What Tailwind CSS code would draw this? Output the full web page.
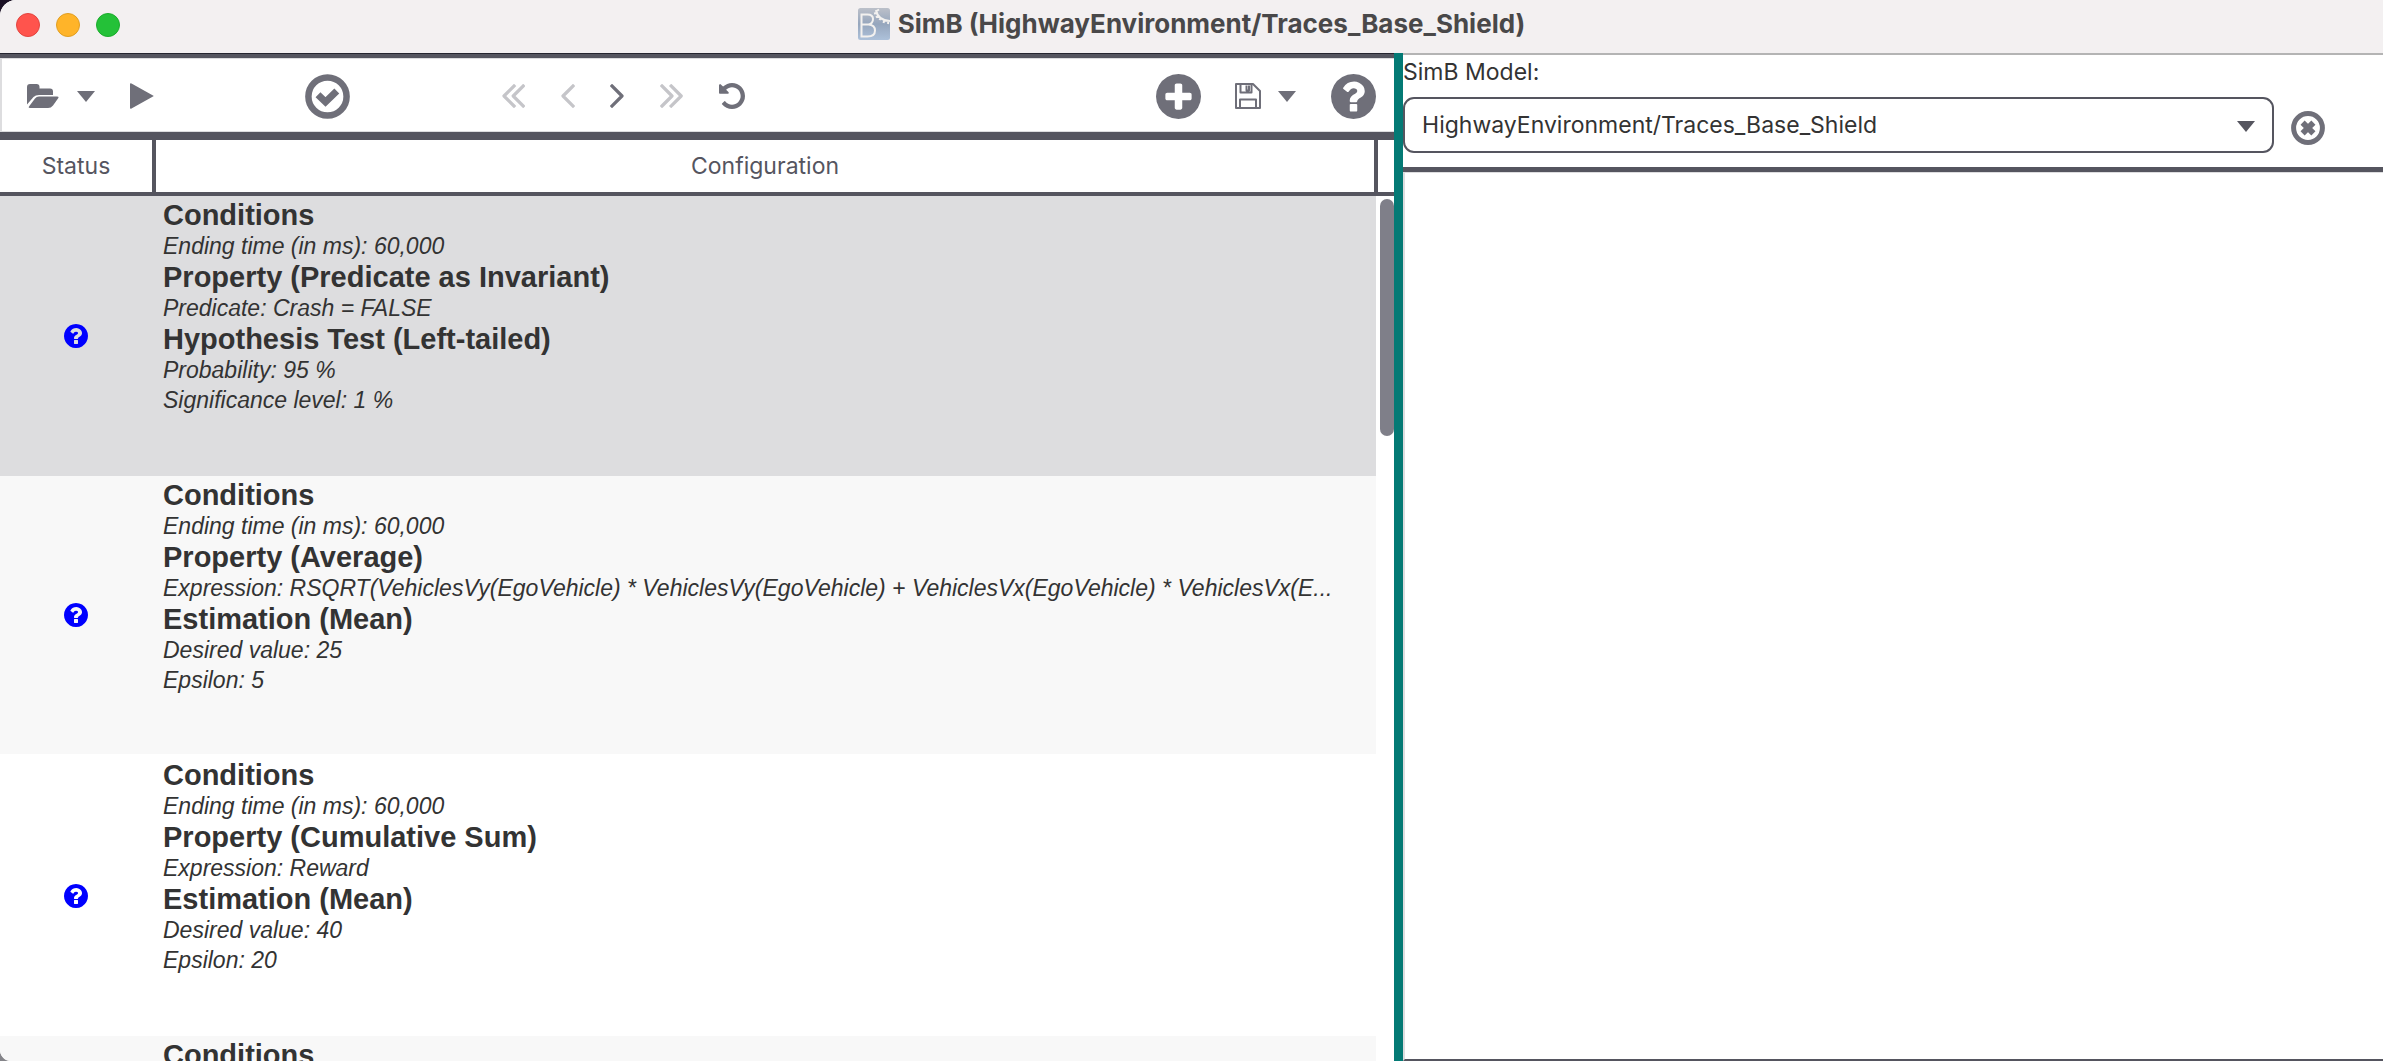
<!DOCTYPE html>
<html lang="en">
<head>
<meta charset="utf-8">
<title>SimB (HighwayEnvironment/Traces_Base_Shield)</title>
<script src="https://cdn.jsdelivr.net/npm/@tailwindcss/browser@4"></script>
</head>
<body class="bg-linear-to-b from-[#1a1024] to-[#85858a]">
<svg class="hidden" aria-hidden="true">
  <symbol id="caret" viewBox="0 0 18 11"><path d="M0 0H18L9 11Z"/></symbol>
  <symbol id="question" viewBox="0 0 1536 1536"><path d="M896 1248v-192q0-14-9-23t-23-9H672q-14 0-23 9t-9 23v192q0 14 9 23t23 9h192q14 0 23-9t9-23zm256-672q0-88-55.500-163T958 297t-170-41q-243 0-371 213-15 24 8 42l132 100q7 6 19 6 16 0 25-12 53-68 86-92 34-24 86-24 48 0 85.500 26t37.500 59q0 38-20 61t-68 45q-63 28-115.500 86.500T640 892v36q0 14 9 23t23 9h192q14 0 23-9t9-23q0-19 21.500-49.500T972 829q32-18 49-28.500t46-35 44.500-48 28-60.500 12.500-81zm384 192q0 209-103 385.500T1153.500 1433 768 1536t-385.500-103T103 1153.500 0 768t103-385.500T382.500 103 768 0t385.500 103T1433 382.500 1536 768z"/></symbol>
</svg>

<div class="flex h-screen flex-col overflow-hidden rounded-tl-[16px] rounded-bl-[11px] bg-white font-['Inter','Liberation_Sans',sans-serif] text-[#333333]">
  <header class="relative flex h-[53px] shrink-0 items-center justify-center bg-[#f3f0f1] pb-[6px]">
    <div class="absolute left-4 top-[13px] flex gap-4">
      <button aria-label="Close" class="size-6 rounded-full border border-[#e2453f] bg-[#ff544d]"></button>
      <button aria-label="Minimize" class="size-6 rounded-full border border-[#e09e22] bg-[#ffb429]"></button>
      <button aria-label="Zoom" class="size-6 rounded-full border border-[#1bac2c] bg-[#24c138]"></button>
    </div>
    <svg class="mr-2 size-8" viewBox="0 0 32 32" fill="none" aria-hidden="true">
      <defs><linearGradient id="logo" x1="0" y1="0" x2="0" y2="1"><stop offset="0" stop-color="#bcc0c9"/><stop offset=".5" stop-color="#96a6bd"/><stop offset="1" stop-color="#adc1da"/></linearGradient></defs>
      <rect width="32" height="32" rx="2.500" fill="url(#logo)"/>
      <path d="M3.500 6.500V28.500H9.500Q17 28.500 17 22.500Q17 17 10.500 16.500Q15 15.500 15 11Q15 6.500 9.500 6.500ZM3.500 16.500H10.500" stroke="#f3f1ef" stroke-width="2"/>
      <path d="M18 2C19 8 23 12.500 32 13M16 5.500L19 5M18 9.500L21 7M21.500 12L23 9.500M25.500 15L26.500 11.500M30 16L30.500 12.500M21 1.500L18.500 3" stroke="#f3f1ef" stroke-width="2"/>
    </svg>
    <h1 class="text-[26px] leading-8 font-bold text-[#494849]">SimB (HighwayEnvironment/Traces_Base_Shield)</h1>
  </header>

  <main class="grid min-h-0 flex-1 grid-cols-[58.5%_9px_1fr]">
    <section class="flex min-h-0 min-w-0 flex-col">
      <div class="h-[5px] shrink-0 border-t border-[#252530] bg-[#55555f]"></div>
      <div class="flex h-[74px] shrink-0 items-center border-y border-l-2 border-[#dddddf] pl-[25px] pr-[18px] pt-[2px] text-[#6f6f79]">
        <button aria-label="Open"><svg class="h-6 w-8" viewBox="0 0 32 24" fill="currentColor"><path d="M0 19V3Q0 0 3 0H9.500Q12.500 0 12.500 3V4.500H23Q26 4.500 26 7.500V11H12Q8.500 11 6.500 13L0 20.500ZM2 22.500L8 14.500Q9.500 12.500 12 12.500H30Q32.500 12.500 31 14.500L26 21.500Q24 24 21 24H3Q1 24 2 22.500Z"/></svg></button>
        <button aria-label="Recent files" class="ml-[18px]"><svg class="h-[11px] w-[18px]" fill="currentColor"><use href="#caret"/></svg></button>
        <button aria-label="Run" class="ml-[35px]"><svg class="h-[26px] w-6" viewBox="0 0 24 26" fill="currentColor"><path d="M0 1.200Q0-.4 1.500.4L23 12.400Q24.200 13 23 13.600L1.500 25.600Q0 26.400 0 24.800Z"/></svg></button>
        <button aria-label="Check" class="ml-[151px]"><svg class="size-[45px]" viewBox="0 0 45 45" fill="none" stroke="currentColor" stroke-width="6.500"><circle cx="22.500" cy="22.500" r="19.100"/><path d="M13 20.800L20.500 28L31.800 17" stroke-width="7"/></svg></button>
        <div class="ml-[152px] flex items-center">
          <button aria-label="First" disabled class="text-[#c5c5c9]"><svg class="h-6 w-[23px]" viewBox="0 0 23 24" fill="none" stroke="currentColor" stroke-width="3.200" stroke-linecap="square" stroke-linejoin="round"><path d="M12 2L2 12L12 22M21.200 2L11.200 12L21.200 22"/></svg></button>
          <button aria-label="Previous" disabled class="ml-9 text-[#c5c5c9]"><svg class="h-6 w-[14px]" viewBox="0 0 14 24" fill="none" stroke="currentColor" stroke-width="3.200" stroke-linecap="square" stroke-linejoin="round"><path d="M12 2L2 12L12 22"/></svg></button>
          <button aria-label="Next" class="ml-[35px]"><svg class="h-6 w-[14px]" viewBox="0 0 14 24" fill="none" stroke="currentColor" stroke-width="3.200" stroke-linecap="square" stroke-linejoin="round"><path d="M2 2L12 12L2 22"/></svg></button>
          <button aria-label="Last" disabled class="ml-9 text-[#c5c5c9]"><svg class="h-6 w-[23px]" viewBox="0 0 23 24" fill="none" stroke="currentColor" stroke-width="3.200" stroke-linecap="square" stroke-linejoin="round"><path d="M2 2L12 12L2 22M11.200 2L21.200 12L11.200 22"/></svg></button>
          <button aria-label="Reset" class="ml-9"><svg class="size-[26px]" viewBox="0 0 1536 1536" fill="currentColor"><path d="M1536 768q0 156-61 298t-164 245-245 164-298 61q-172 0-327-72.500T177 1259q-7-10-6.500-22.500t8.500-20.500l137-138q10-9 25-9 16 2 23 12 73 95 179 147t225 52q104 0 198.500-40.500T1130 1130t109.500-163.500T1280 768t-40.500-198.500T1130 406 966.500 296.500 768 256q-98 0-188 35.500T420 393l137 138q31 30 14 69-17 40-59 40H64q-26 0-45-19T0 576V128q0-42 40-59 39-17 69 14l130 129q107-101 244.500-156.500T768 0q156 0 298 61t245 164 164 245 61 298z"/></svg></button>
        </div>
        <div class="ml-auto flex items-center">
          <button aria-label="Add"><svg class="size-[45px]" viewBox="0 0 1536 1536" fill="currentColor"><path d="M1216 832V704q0-26-19-45t-45-19H896V384q0-26-19-45t-45-19H704q-26 0-45 19t-19 45v256H384q-26 0-45 19t-19 45v128q0 26 19 45t45 19h256v256q0 26 19 45t45 19h128q26 0 45-19t19-45V896h256q26 0 45-19t19-45zm320-64q0 209-103 385.500T1153.500 1433 768 1536t-385.500-103T103 1153.500 0 768t103-385.500T382.500 103 768 0t385.500 103T1433 382.500 1536 768z"/></svg></button>
          <button aria-label="Save" class="ml-[34px]"><svg class="size-[26px]" viewBox="0 0 26 26" fill="none" stroke="currentColor" stroke-width="2" stroke-linejoin="round"><path d="M1 1H18L25 8V25H1ZM5 25V16.500H21V25M5.500 1V9.500H16.500V1M11.500 2.500V7.500H14V2.500"/></svg></button>
          <button aria-label="Save options" class="ml-[17px]"><svg class="h-[11px] w-[18px]" fill="currentColor"><use href="#caret"/></svg></button>
          <button aria-label="Help" class="ml-[35px]"><svg class="size-[45px]" fill="currentColor"><use href="#question"/></svg></button>
        </div>
      </div>
      <div class="h-2 shrink-0 bg-[#55555f]"></div>

      <div class="relative min-h-0 flex-1 overflow-hidden">
        <table class="w-full table-fixed border-separate border-spacing-0 font-['Liberation_Sans',Arial,sans-serif]">
          <colgroup><col class="w-[156px]"><col><col class="w-[18px]"></colgroup>
          <thead class="font-['Inter',sans-serif] text-[23px] leading-[52px] text-[#55555f]">
            <tr>
              <th scope="col" class="border-b-4 border-r-4 border-[#55555f] p-0 font-normal">Status</th>
              <th scope="col" class="border-b-4 border-r-2 border-[#55555f] p-0 font-normal">Configuration</th>
              <td class="border-b-4 border-l-2 border-[#55555f] p-0"></td>
            </tr>
          </thead>
          <tbody id="rows"></tbody>
        </table>
        <div class="absolute right-0 top-[59px] h-[237px] w-[14px] rounded-full bg-[#7f7f89]"></div>
      </div>
    </section>

    <div class="bg-[#047a75]"></div>

    <section class="flex min-w-0 flex-col border-t-2 border-[#b4b4b4]">
      <label for="model" class="pt-[2px] text-[23px] leading-[30px]">SimB Model:</label>
      <div class="mt-[10px] flex h-14 shrink-0 items-center gap-[17px] pr-[58px]">
        <div class="relative h-full flex-1">
          <select id="model" class="h-full w-full appearance-none rounded-[11px] border-2 border-[#55555f] bg-white pl-[17px] text-[23px]">
            <option>HighwayEnvironment/Traces_Base_Shield</option>
          </select>
          <svg class="pointer-events-none absolute right-[19px] top-6 h-[11px] w-[18px]" fill="#55555f"><use href="#caret"/></svg>
        </div>
        <button aria-label="Remove model" class="mt-[6px] text-[#6f6f79]"><svg class="size-[34px]" viewBox="0 0 34 34" fill="none" stroke="currentColor" stroke-width="5"><circle cx="17" cy="17" r="14.400"/><path d="M11.600 11.600L22.400 22.400M22.400 11.600L11.600 22.400" stroke-width="5.800"/></svg></button>
      </div>
      <div class="mt-[14px] h-[5px] shrink-0 bg-[#55555f]"></div>
      <div class="flex-1 border-l-2 border-t border-[#dddddf] border-b-[#55555f] border-b-2"></div>
    </section>
  </main>
</div>

<script>
  const items = [
    ["Conditions", ["Ending time (in ms): 60,000"], "Property (Predicate as Invariant)", ["Predicate: Crash = FALSE"], "Hypothesis Test (Left-tailed)", ["Probability: 95 %", "Significance level: 1 %"]],
    ["Conditions", ["Ending time (in ms): 60,000"], "Property (Average)", ["Expression: RSQRT(VehiclesVy(EgoVehicle) * VehiclesVy(EgoVehicle) + VehiclesVx(EgoVehicle) * VehiclesVx(E..."], "Estimation (Mean)", ["Desired value: 25", "Epsilon: 5"]],
    ["Conditions", ["Ending time (in ms): 60,000"], "Property (Cumulative Sum)", ["Expression: Reward"], "Estimation (Mean)", ["Desired value: 40", "Epsilon: 20"]],
    ["Conditions", []]
  ];
  const backgrounds = ["bg-[#dddddf]", "border-b-2 border-white bg-[#f8f8f8]", "bg-white", "bg-[#f8f8f8]"];
  document.getElementById("rows").innerHTML = items.map((parts, i) => {
    const bg = backgrounds[i];
    const body = parts.map(p => Array.isArray(p)
      ? p.map(t => `<p class="text-[23px] leading-[30px] italic">${t}</p>`).join("")
      : `<h2 class="text-[29px] leading-8 font-bold">${p}</h2>`).join("");
    return `<tr class="h-[280px]"><td class="${bg} p-0 pr-1"><svg role="img" aria-label="Not checked" class="mx-auto size-6" fill="#0000ff"><use href="#question"/></svg></td><td class="${bg} overflow-hidden whitespace-nowrap p-0 pl-[7px] pt-[3px] align-top">${body}</td><td class="p-0"></td></tr>`;
  }).join("");
</script>
</body>
</html>
